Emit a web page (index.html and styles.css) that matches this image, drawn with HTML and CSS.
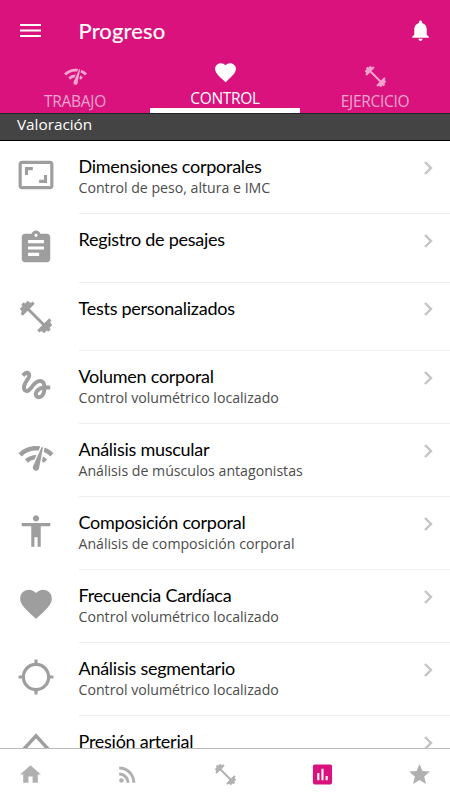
FILE: index.html
```html
<!DOCTYPE html>
<html lang="es">
<head>
<meta charset="utf-8">
<title>Progreso</title>
<link rel="stylesheet" href="styles.css">
</head>
<body>
<svg class="sprite" aria-hidden="true">
  <symbol id="network" viewBox="0 0 24 24"><path d="M15.9 5c-.17 0-.32.09-.41.23l-.07.15-5.18 11.65c-.16.29-.26.61-.26.96 0 1.11.9 2.01 2.01 2.01.96 0 1.77-.68 1.96-1.59l.01-.03L16.4 5.5c0-.28-.22-.5-.5-.5zM1 9l2 2c2.88-2.88 6.79-4.08 10.53-3.62l1.19-2.68C9.89 3.84 4.74 5.27 1 9zm20 2l2-2c-1.64-1.64-3.55-2.82-5.59-3.57l-.53 2.82c1.5.62 2.9 1.53 4.12 2.75zm-4 4l2-2c-.8-.8-1.7-1.42-2.66-1.89l-.55 2.92c.42.27.83.59 1.21.97zM5 13l2 2c1.13-1.13 2.56-1.79 4.03-2l1.28-2.88c-2.63-.08-5.3.87-7.31 2.88z"/></symbol>
  <symbol id="heart" viewBox="0 0 24 24"><path d="M12 21.35l-1.45-1.32C5.4 15.36 2 12.28 2 8.5 2 5.42 4.42 3 7.5 3c1.74 0 3.41.81 4.5 2.09C13.09 3.81 14.76 3 16.5 3 19.58 3 22 5.42 22 8.5c0 3.78-3.4 6.86-8.55 11.54L12 21.35z"/></symbol>
  <symbol id="dumbbell" viewBox="0 0 24 24"><g fill="none" stroke="currentColor"><path d="M6 6l12 12" stroke-width="1.9"/><path d="M2.900 10.500l7.600-7.600M2.400 7.600l5.200-5.200M13.500 21.100l7.600-7.600M16.400 21.600l5.200-5.200" stroke-width="2"/><path d="M3.300 9l5.700-5.700M15 20.700l5.700-5.700M3.200 4.800l1.600-1.600M19.200 20.800l1.600-1.600" stroke-width="1.6"/></g></symbol>
  <symbol id="chevron" viewBox="0 0 10 14"><path d="M1 1l6 6-6 6" fill="none" stroke="currentColor" stroke-width="2.4"/></symbol>
</svg>
<div class="app">
  <header class="header">
    <div class="toolbar">
      <svg class="menu" viewBox="0 0 21 14"><path d="M0 0h21v2H0zM0 5.5h21v2H0zM0 11h21v2H0z"/></svg>
      <h1 class="title">Progreso</h1>
      <svg class="bell" viewBox="0 0 24 24"><path d="M12 22c1.1 0 2-.9 2-2h-4c0 1.1.89 2 2 2zm6-6v-5c0-3.07-1.64-5.64-4.5-6.32V4c0-.83-.67-1.5-1.5-1.5s-1.5.67-1.5 1.5v.68C7.63 5.36 6 7.92 6 11v5l-2 2v1h16v-1l-2-2z"/></svg>
    </div>
    <nav class="tabs">
      <div class="tab"><svg><use href="#network"/></svg><span>TRABAJO</span></div>
      <div class="tab tab-active"><svg><use href="#heart"/></svg><span>CONTROL</span></div>
      <div class="tab"><svg><use href="#dumbbell"/></svg><span>EJERCICIO</span></div>
    </nav>
  </header>
  <h2 class="section">Valoración</h2>
  <main class="list">
    <div class="row">
      <svg class="icon" viewBox="0 0 24 24"><path d="M19 12h-2v3h-3v2h5v-5zM7 9h3V7H5v5h2V9zm14-6H3c-1.1 0-2 .9-2 2v14c0 1.1.9 2 2 2h18c1.1 0 2-.9 2-2V5c0-1.1-.9-2-2-2zm0 16.01H3V4.99h18v14.02z"/></svg>
      <div class="body"><div class="text"><h3>Dimensiones corporales</h3><p>Control de peso, altura e IMC</p></div><svg class="chev"><use href="#chevron"/></svg></div>
    </div>
    <div class="row row-single">
      <svg class="icon" viewBox="0 0 24 24"><path d="M19 3h-4.180C14.4 1.840 13.3 1 12 1c-1.3 0-2.4.84-2.82 2H5c-1.1 0-2 .9-2 2v14c0 1.1.9 2 2 2h14c1.1 0 2-.9 2-2V5c0-1.1-.9-2-2-2zm-7 0c.55 0 1 .45 1 1s-.45 1-1 1-1-.45-1-1 .45-1 1-1zm2 14H7v-2h7v2zm3-4H7v-2h10v2zm0-4H7V7h10v2z"/></svg>
      <div class="body"><div class="text"><h3>Registro de pesajes</h3></div><svg class="chev"><use href="#chevron"/></svg></div>
    </div>
    <div class="row row-single">
      <svg class="icon"><use href="#dumbbell"/></svg>
      <div class="body"><div class="text"><h3>Tests personalizados</h3></div><svg class="chev"><use href="#chevron"/></svg></div>
    </div>
    <div class="row">
      <svg class="icon" viewBox="0 0 24 24"><path d="M4.590 6.890c.7-.71 1.4-1.35 1.71-1.22.5.2 0 1.03-.3 1.52-.25.42-2.86 3.89-2.86 6.31 0 1.28.48 2.34 1.34 2.98.75.56 1.74.73 2.64.46 1.07-.31 1.95-1.4 3.06-2.77 1.21-1.49 2.83-3.44 4.08-3.44 1.63 0 1.65 1.01 1.76 1.79-3.78.64-5.38 3.67-5.38 5.37 0 1.7 1.44 3.09 3.21 3.09 1.63 0 4.29-1.33 4.69-6.1H21v-2.5h-2.47c-.15-1.65-1.09-4.2-4.03-4.2-2.25 0-4.18 1.91-4.94 2.84-.58.73-2.06 2.48-2.29 2.72-.25.3-.68.84-1.11.84-.45 0-.72-.83-.36-1.92.35-1.09 1.4-2.86 1.85-3.52.78-1.14 1.3-1.92 1.3-3.28C8.95 3.69 7.31 3 6.44 3 5.12 3 3.97 4 3.72 4.25c-.36.36-.66.66-.88.93l1.75 1.71zm9.29 11.66c-.31 0-.74-.26-.74-.72 0-.6.73-2.2 2.87-2.76-.3 2.69-1.43 3.48-2.13 3.48z"/></svg>
      <div class="body"><div class="text"><h3>Volumen corporal</h3><p>Control volumétrico localizado</p></div><svg class="chev"><use href="#chevron"/></svg></div>
    </div>
    <div class="row">
      <svg class="icon"><use href="#network"/></svg>
      <div class="body"><div class="text"><h3>Análisis muscular</h3><p>Análisis de músculos antagonistas</p></div><svg class="chev"><use href="#chevron"/></svg></div>
    </div>
    <div class="row">
      <svg class="icon" viewBox="0 0 24 24"><path d="M12 2c1.1 0 2 .9 2 2s-.9 2-2 2-2-.9-2-2 .9-2 2-2zm9 7h-6v13h-2v-6h-2v6H9V9H3V7h18v2z"/></svg>
      <div class="body"><div class="text"><h3>Composición corporal</h3><p>Análisis de composición corporal</p></div><svg class="chev"><use href="#chevron"/></svg></div>
    </div>
    <div class="row">
      <svg class="icon"><use href="#heart"/></svg>
      <div class="body"><div class="text"><h3>Frecuencia Cardíaca</h3><p>Control volumétrico localizado</p></div><svg class="chev"><use href="#chevron"/></svg></div>
    </div>
    <div class="row">
      <svg class="icon" viewBox="0 0 24 24"><path d="M20.940 11c-.46-4.17-3.77-7.48-7.94-7.94V1h-2v2.060C6.830 3.520 3.520 6.830 3.060 11H1v2h2.060c.46 4.17 3.77 7.48 7.94 7.94V23h2v-2.060c4.17-.46 7.48-3.77 7.94-7.94H23v-2h-2.060zM12 19c-3.87 0-7-3.13-7-7s3.13-7 7-7 7 3.13 7 7-3.13 7-7 7z"/></svg>
      <div class="body"><div class="text"><h3>Análisis segmentario</h3><p>Control volumétrico localizado</p></div><svg class="chev"><use href="#chevron"/></svg></div>
    </div>
    <div class="row">
      <svg class="icon" viewBox="0 0 24 24"><path d="M4 11.800l8-8.800 8 8.800" fill="none" stroke="currentColor" stroke-width="2.200"/></svg>
      <div class="body"><div class="text"><h3>Presión arterial</h3></div><svg class="chev"><use href="#chevron"/></svg></div>
    </div>
  </main>
  <nav class="bottom">
    <svg viewBox="0 0 24 24"><path d="M10 20v-6h4v6h5v-8h3L12 3 2 12h3v8z"/></svg>
    <svg viewBox="0 0 24 24"><circle cx="6.180" cy="17.820" r="2.180"/><path d="M4 4.440v2.830c7.030 0 12.730 5.700 12.730 12.730h2.830c0-8.590-6.970-15.560-15.560-15.560zm0 5.660v2.830c3.900 0 7.070 3.170 7.070 7.070h2.830c0-5.470-4.430-9.900-9.900-9.900z"/></svg>
    <svg><use href="#dumbbell"/></svg>
    <svg class="active" viewBox="0 0 24 24"><path d="M19.400 2.500H4.600c-1.100 0-1.800.7-1.800 1.800v15.400c0 1.100.7 1.800 1.800 1.800h14.800c1.100 0 1.800-.7 1.800-1.800V4.300c0-1.100-.7-1.800-1.800-1.800zM9 17.500H7v-7h2v7zm4 0h-2V6.500h2v11zm4 0h-2v-4h2v4z"/></svg>
    <svg viewBox="0 0 24 24"><path d="M12 17.270L18.180 21l-1.640-7.030L22 9.240l-7.190-.61L12 2 9.190 8.630 2 9.240l5.460 4.730L5.820 21z"/></svg>
  </nav>
</div>
</body>
</html>
```
FILE: styles.css
```css
* { box-sizing: border-box; margin: 0; padding: 0; }
body { font-family: "Open Sans", "Noto Sans", sans-serif; background: #fff; }
svg { display: block; fill: currentColor; flex: none; }
.sprite { display: none; }
.app { width: 450px; height: 800px; display: flex; flex-direction: column; overflow: hidden; }
.header { height: 113px; flex: none; background: #d9127e; color: #fff; }
.toolbar { height: 61px; display: flex; align-items: center; padding: 0 17px 0 20px; }
.menu { width: 21px; height: 14px; }
.title { flex: 1; margin-left: 37.500px; padding-top: 1px; font: 400 22px/30px Lato, sans-serif; letter-spacing: 0.150px; -webkit-text-stroke: 0.2px currentColor; }
.bell { width: 25px; height: 25px; }
.tabs { height: 52px; display: flex; }
.tab { flex: 1; height: 52px; display: flex; flex-direction: column; align-items: center; padding-top: 2.500px; font-size: 15.500px; letter-spacing: -0.300px; line-height: 20px; color: #f3a5cf; }
.tab svg { width: 25px; height: 25px; margin-bottom: 2.500px; }
.tab-active { color: #fff; padding-top: 0; border-bottom: 5px solid #fff; }
.tab-active svg { margin-top: -1px; }
.tab-active span { margin-top: 0.500px; }
.section { height: 28px; flex: none; padding-left: 17px; background: #444; border-top: 1px solid #222; border-bottom: 1px solid #000; color: #fff; font-size: 15.300px; font-weight: 400; line-height: 21px; }
.list { flex: 1; min-height: 0; overflow: hidden; }
.row { height: 73px; display: flex; color: #9e9e9e; }
.row-single { height: 68.500px; }
.icon { width: 38px; height: 38px; margin: 15px 24px 0 17.400px; }
.body { flex: 1; display: flex; border-bottom: 1px solid #eee; margin-left: -0.900px; }
.text { flex: 1; padding-top: 13.400px; }
.text h3 { font: 400 18px/24px Lato, sans-serif; letter-spacing: -0.260px; color: #000; }
.text p { margin-top: 0.600px; font-size: 14.150px; line-height: 18px; color: #4c4c4c; }
.chev { width: 10px; height: 14px; margin: 19.500px 16px 0 0; color: #c4c4c6; }
.bottom { height: 52px; flex: none; display: flex; justify-content: space-between; padding: 13px 18px 0; border-top: 1px solid #bbb; background: #fff; color: #b0b0b0; }
.bottom svg { width: 25px; height: 25px; }
.bottom .active { color: #d9127e; }
```
